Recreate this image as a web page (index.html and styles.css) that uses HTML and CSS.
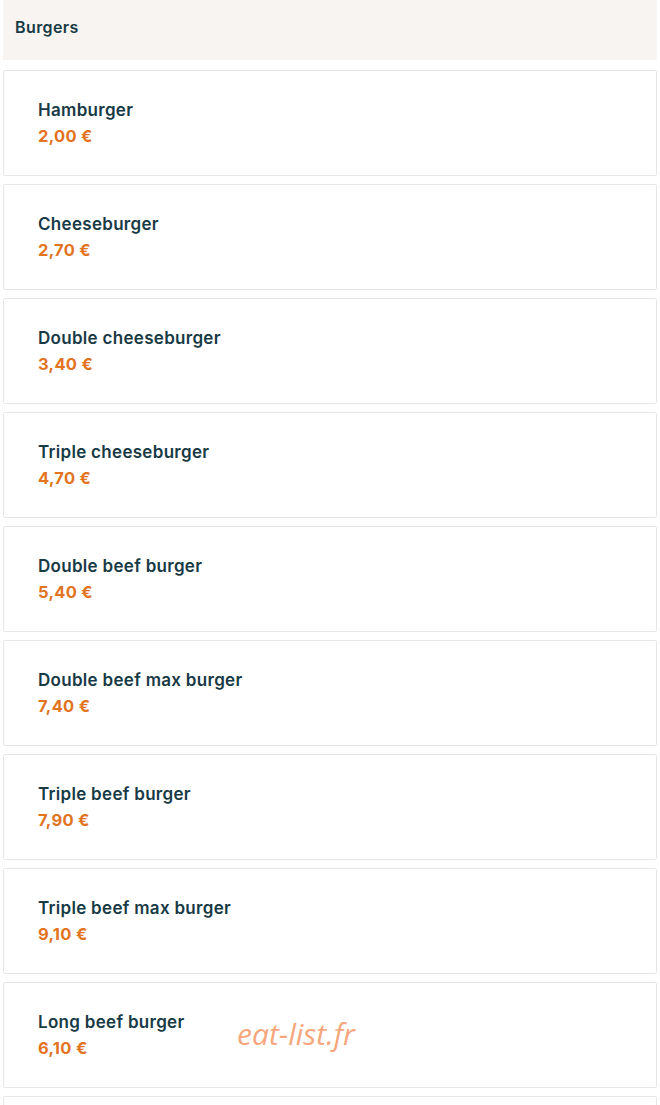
FILE: index.html
```html
<!DOCTYPE html>
<html lang="fr">
<head>
    <meta charset="UTF-8">
    <meta name="viewport" content="width=device-width, initial-scale=1.0">
    <title>Burgers</title>
    <link rel="stylesheet" href="styles.css">
</head>
<body>

<section class="menu">
    <header class="menu-title">
        <h2>Burgers</h2>
    </header>

    <ul class="items">
        <li class="item"><span class="name">Hamburger</span><span class="price">2,00 €</span></li>
        <li class="item"><span class="name">Cheeseburger</span><span class="price">2,70 €</span></li>
        <li class="item"><span class="name">Double cheeseburger</span><span class="price">3,40 €</span></li>
        <li class="item"><span class="name">Triple cheeseburger</span><span class="price">4,70 €</span></li>
        <li class="item"><span class="name">Double beef burger</span><span class="price">5,40 €</span></li>
        <li class="item"><span class="name">Double beef max burger</span><span class="price">7,40 €</span></li>
        <li class="item"><span class="name">Triple beef burger</span><span class="price">7,90 €</span></li>
        <li class="item"><span class="name">Triple beef max burger</span><span class="price">9,10 €</span></li>
        <li class="item"><span class="name">Long beef burger</span><span class="price">6,10 €</span><span class="watermark">eat-list.fr</span></li>
        <li class="item item-empty"></li>
    </ul>
</section>

</body>
</html>
```

FILE: styles.css
```css
body {
    font-family: Inter, "Noto Sans", sans-serif;
    background-color: #fff;
    margin: 0;
    padding: 0 3px;
    color: #183a45;
}
.menu-title {
    background-color: #f7f4f1;
    height: 60px;
    display: flex;
    align-items: center;
    padding: 0 12px;
}
.menu-title h2 {
    margin: 0 0 6px;
    font-size: 16px;
    font-weight: 600;
    letter-spacing: 0.4px;
}
.items {
    list-style: none;
    margin: 10px 0 0;
    padding: 0;
    display: flex;
    flex-direction: column;
    gap: 8px;
}
.item {
    position: relative;
    display: flex;
    flex-direction: column;
    border: 1px solid #e6e6e6;
    border-radius: 2px;
    padding: 26px 34px;
}
.item-empty {
    height: 52px;
}
.name {
    font-size: 17px;
    font-weight: 600;
    line-height: 26px;
    letter-spacing: 0.3px;
}
.price {
    font-size: 16.5px;
    font-weight: 700;
    line-height: 26px;
    letter-spacing: 0.3px;
    color: #e2731f;
}
/* site watermark */
.watermark {
    position: absolute;
    left: 233px;
    top: 30px;
    font-family: "Open Sans", sans-serif;
    font-style: italic;
    font-size: 30px;
    color: #f6a77e;
}
```
